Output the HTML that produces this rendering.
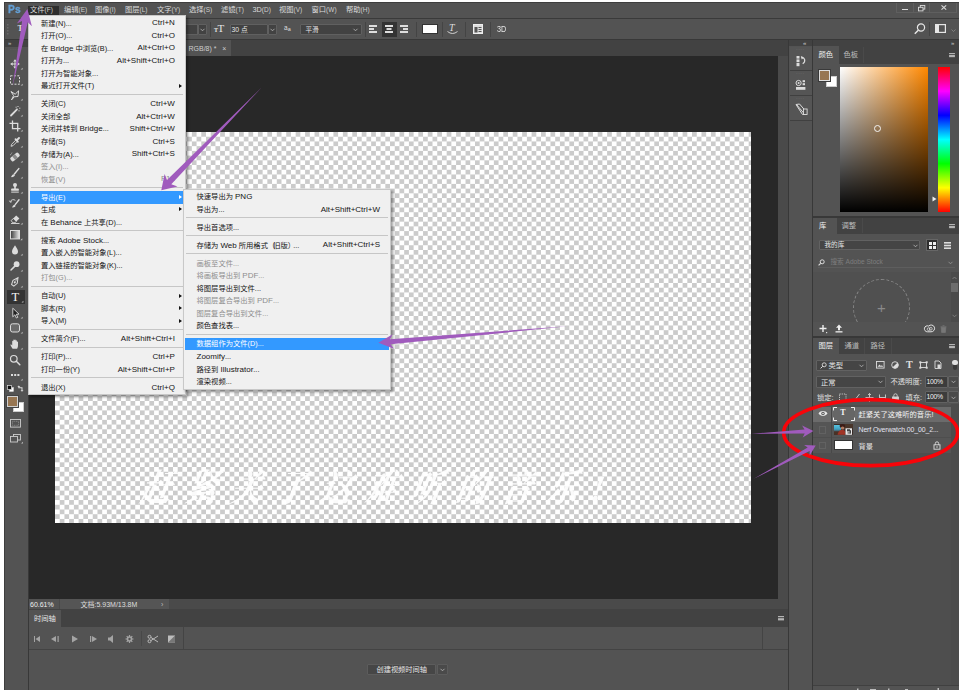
<!DOCTYPE html>
<html lang="zh-CN">
<head>
<meta charset="utf-8">
<title>Photoshop</title>
<style>
*{box-sizing:border-box;margin:0;padding:0}
html,body{width:962px;height:690px;overflow:hidden;background:#fff}
body{position:relative;font-family:"Liberation Sans","Noto Sans CJK SC",sans-serif;font-size:8px;color:#ddd;line-height:1}
.abs{position:absolute}
#app{position:absolute;left:4px;top:2px;width:955px;height:688px;background:#535353;overflow:hidden}
#pg{position:absolute;left:-4px;top:-2px;width:962px;height:690px}
.t{position:absolute;white-space:nowrap;line-height:1}
svg{position:absolute;overflow:visible}
#menubar{left:4px;top:2px;width:955px;height:16px;background:#535353}
.mb{position:absolute;top:6.3px;font-size:7.3px;color:#dcdcdc;white-space:nowrap}
.mb small{font-size:6.5px;color:#cfcfcf}
#optbar{left:4px;top:19px;width:955px;height:20px;background:#535353}
.hline{position:absolute;height:1px;background:#3a3a3a}
.vline{position:absolute;width:1px;background:#3a3a3a}
.inp{position:absolute;background:#424242;border:1px solid #606060;border-radius:1px}
.menu{position:absolute;background:#f0f0f0;border:1px solid #c8c8c8;box-shadow:1.5px 1.5px 2.5px rgba(0,0,0,.38);color:#151515;font-size:7.3px}
.menu i{font-style:normal;font-size:8px}
.menu u{text-decoration:none;letter-spacing:-2px}
.mi{position:absolute;left:1px;right:1px;height:12.56px}
.mi .l{position:absolute;top:2.6px;white-space:nowrap}
.mi .r{position:absolute;top:2.3px;white-space:nowrap;text-align:right;font-size:8px}
.mi.dis{color:#8e8e8e}
.mi.hl{background:#3399ff;color:#fff}
.mi .ar{position:absolute;top:3.8px;width:0;height:0;border-left:3px solid #111;border-top:2.5px solid transparent;border-bottom:2.5px solid transparent}
.mi.hl .ar{border-left-color:#fff}
.ms{position:absolute;height:1px;background:#c6c6c6}
.tab{position:absolute;font-size:8px;white-space:nowrap}
</style>
</head>
<body>
<div id="app"><div id="pg">

<!-- canvas area -->
<div class="abs" style="left:29px;top:56px;width:749px;height:543px;background:#282828"></div>
<div class="abs" style="left:55px;top:132px;width:696px;height:391px;background-color:#fff;background-image:conic-gradient(#cbcbcb 25%,#fff 0 50%,#cbcbcb 0 75%,#fff 0);background-size:9.438px 9.438px"></div>
<div class="t" style="left:141px;top:472.500px;font-family:'Liberation Serif','Noto Serif CJK SC',serif;font-weight:700;font-style:italic;font-size:31px;letter-spacing:14.100px;color:#fff;opacity:.92;transform:skewX(-10deg) scaleY(1.2);transform-origin:0 50%">赶紧关了这难听的音乐!</div>
<!-- menubar -->
<div class="abs" id="menubar"></div>
<div class="abs" style="left:28px;top:5.800px;width:30.500px;height:9.400px;background:#2e2e2e"></div>
<div class="t" style="left:8.300px;top:3.800px;font-size:11.800px;font-weight:bold;color:#64a0d6;letter-spacing:0.200px;transform:scaleX(.86);transform-origin:0 0;-webkit-text-stroke:0.350px #64a0d6">Ps</div>
<div class="mb" style="left:30px">文件<small>(F)</small></div>
<div class="mb" style="left:64px">编辑<small>(E)</small></div>
<div class="mb" style="left:95px">图像<small>(I)</small></div>
<div class="mb" style="left:125px">图层<small>(L)</small></div>
<div class="mb" style="left:157px">文字<small>(Y)</small></div>
<div class="mb" style="left:189px">选择<small>(S)</small></div>
<div class="mb" style="left:221px">滤镜<small>(T)</small></div>
<div class="mb" style="left:252.5px">3D<small>(D)</small></div>
<div class="mb" style="left:279px">视图<small>(V)</small></div>
<div class="mb" style="left:311.5px">窗口<small>(W)</small></div>
<div class="mb" style="left:346px">帮助<small>(H)</small></div>
<div class="hline" style="left:4px;top:18px;width:955px"></div>
<div class="abs" style="left:896px;top:2px;width:61px;height:11px;border:1px solid #5f5f5f;border-top:none"></div>
<div class="vline" style="left:913px;top:2px;height:11px;background:#5f5f5f"></div>
<div class="vline" style="left:929px;top:2px;height:11px;background:#5f5f5f"></div>
<div class="abs" style="left:901.500px;top:8.500px;width:6px;height:1.600px;background:#dadada"></div>
<svg style="left:918px;top:5px" width="8" height="7" viewBox="0 0 8 7"><rect x="2.300" y="0.500" width="4.500" height="3.600" fill="none" stroke="#dadada" stroke-width="0.900"/><rect x="0.500" y="2.300" width="4.500" height="3.600" fill="#535353" stroke="#dadada" stroke-width="0.900"/></svg>
<svg style="left:941px;top:5.300px" width="6" height="5" viewBox="0 0 6 5"><path d="M0.500 0.300L5.200 4.700M5.200 0.300L0.500 4.700" stroke="#dadada" stroke-width="1.100"/></svg>
<!-- options bar -->
<div class="abs" id="optbar"></div>
<div class="hline" style="left:4px;top:39px;width:955px;background:#383838"></div>
<div class="inp" style="left:186px;top:24px;width:12px;height:11px;border-left:none"></div>
<div class="inp" style="left:198px;top:24px;width:8.500px;height:11px"></div>
<svg style="left:199.800px;top:28px" width="5" height="4" viewBox="0 0 5 4"><path d="M0.5 0.8L2.5 2.8L4.5 0.8" fill="none" stroke="#bbb" stroke-width="0.8"/></svg>
<div class="vline" style="left:210px;top:22px;height:15px;background:#444"></div>
<div class="t" style="left:214px;top:26.5px;font-family:'Liberation Serif',serif;font-size:6px;color:#e6e6e6;font-weight:bold">T</div>
<div class="t" style="left:217.5px;top:23px;font-family:'Liberation Serif',serif;font-size:11px;color:#e6e6e6">T</div>
<div class="inp" style="left:230px;top:24px;width:38px;height:11px"></div>
<div class="t" style="left:231.500px;top:26.500px;font-size:6.800px;color:#e6e6e6">30 点</div>
<div class="inp" style="left:268px;top:24px;width:9px;height:11px"></div>
<svg style="left:270px;top:28px" width="5" height="4" viewBox="0 0 5 4"><path d="M0.5 0.8L2.5 2.8L4.5 0.8" fill="none" stroke="#bbb" stroke-width="0.8"/></svg>
<div class="t" style="left:284px;top:24.500px;font-size:6.500px;color:#ddd">a<span style="font-size:5.500px;position:relative;top:1.500px">a</span></div>
<div class="inp" style="left:300px;top:24px;width:62px;height:11px"></div>
<div class="t" style="left:305.500px;top:26.500px;font-size:6.600px;color:#e6e6e6">平滑</div>
<svg style="left:353px;top:28px" width="5" height="4" viewBox="0 0 5 4"><path d="M0.5 0.8L2.5 2.8L4.5 0.8" fill="none" stroke="#bbb" stroke-width="0.8"/></svg>
<div class="vline" style="left:365px;top:22px;height:15px;background:#444"></div>
<div class="abs" style="left:382px;top:22px;width:15px;height:15px;background:#333"></div>
<svg style="left:369px;top:25px" width="40" height="9" viewBox="0 0 40 9"><g fill="#ddd"><rect x="0" y="0" width="8" height="2"/><rect x="0" y="3" width="5" height="2"/><rect x="0" y="6" width="8" height="2"/><rect x="16" y="0" width="8" height="2"/><rect x="17.5" y="3" width="5" height="2"/><rect x="16" y="6" width="8" height="2"/><rect x="31" y="0" width="8" height="2"/><rect x="34" y="3" width="5" height="2"/><rect x="31" y="6" width="8" height="2"/></g></svg>
<div class="vline" style="left:416px;top:22px;height:15px;background:#444"></div>
<div class="abs" style="left:421.5px;top:23.5px;width:16px;height:10.5px;background:#fff;border:1px solid #333"></div>
<div class="vline" style="left:442px;top:22px;height:15px;background:#444"></div>
<div class="t" style="left:449px;top:23px;font-family:'Liberation Serif',serif;font-size:10px;color:#ddd;font-style:italic">T</div>
<svg style="left:447px;top:31px" width="11" height="4" viewBox="0 0 11 4"><path d="M0.5 0.5Q5.5 4.5 10.5 0.5" fill="none" stroke="#ddd" stroke-width="0.9"/></svg>
<div class="vline" style="left:465px;top:22px;height:15px;background:#444"></div>
<svg style="left:473px;top:24px" width="10" height="10" viewBox="0 0 10 10"><rect x="0.5" y="0.5" width="9" height="9" fill="#ddd" stroke="#eee"/><rect x="1.5" y="3" width="3" height="5.5" fill="#555"/><rect x="5.5" y="3" width="3" height="1" fill="#555"/><rect x="5.5" y="5" width="3" height="1" fill="#555"/><rect x="5.5" y="7" width="3" height="1" fill="#555"/></svg>
<div class="vline" style="left:490px;top:22px;height:15px;background:#444"></div>
<div class="t" style="left:497px;top:25px;font-size:8.5px;color:#e6e6e6;transform:scaleX(.85);transform-origin:0 0">3D</div>
<svg style="left:914px;top:23px" width="12" height="12" viewBox="0 0 12 12"><circle cx="7" cy="4.5" r="3.6" fill="none" stroke="#e6e6e6" stroke-width="1.2"/><path d="M4.3 7.3L0.8 10.8" stroke="#e6e6e6" stroke-width="1.5"/></svg>
<div class="vline" style="left:929px;top:22px;height:14px;background:#444"></div>
<svg style="left:935px;top:24px" width="12" height="10" viewBox="0 0 12 10"><rect x="0.6" y="0.6" width="9.8" height="7.8" fill="none" stroke="#e6e6e6" stroke-width="1.2"/><rect x="1" y="1" width="3" height="7" fill="#e6e6e6"/></svg>
<svg style="left:950.500px;top:28.500px" width="5" height="3" viewBox="0 0 5 3"><path d="M0.500 0.500L2.500 2.500L4.500 0.500" fill="none" stroke="#909090" stroke-width="0.700"/></svg>
<!-- tab bar -->
<div class="abs" style="left:29px;top:40px;width:759px;height:16px;background:#424242"></div>
<div class="abs" style="left:29px;top:40px;width:202px;height:16px;background:#535353"></div>
<div class="t" style="left:188.500px;top:45px;font-size:7px;color:#cfcfcf">RGB/8) *&nbsp;&nbsp;&nbsp;<span style="font-size:7px">×</span></div>
<!-- toolbar -->
<div class="abs" style="left:4px;top:40px;width:24px;height:650px;background:#535353"></div>
<div class="abs" style="left:4px;top:40px;width:24px;height:7px;background:#424242"></div>
<div class="vline" style="left:28px;top:40px;height:650px;background:#383838"></div>
<div class="t" style="left:8px;top:39.5px;font-size:6px;color:#ccc;letter-spacing:-1px">»</div>
<div class="t" style="left:10px;top:47px;font-size:5px;color:#777;letter-spacing:0.5px">····</div>
<svg style="left:6px;top:24px" width="4" height="11" viewBox="0 0 4 11"><g fill="#6a6a6a"><rect x="1" y="0" width="1.500" height="1.500"/><rect x="1" y="3" width="1.500" height="1.500"/><rect x="1" y="6" width="1.500" height="1.500"/><rect x="1" y="9" width="1.500" height="1.500"/></g></svg>
<div class="t" style="left:17.500px;top:24.500px;font-family:'Liberation Serif',serif;font-size:8px;color:#ddd;font-weight:bold">T</div>
<svg style="left:8.2px;top:57.3px" width="14" height="14" viewBox="0 0 14 14"><g fill="#dcdcdc"><path d="M7 2.200L8.800 4.600H5.200z"/><path d="M7 11.800L8.800 9.400H5.200z"/><path d="M2.200 7L4.600 5.200V8.800z"/><path d="M11.800 7L9.400 5.200V8.800z"/><rect x="6.500" y="4" width="1" height="6"/><rect x="4" y="6.500" width="6" height="1"/></g><path d="M14.6 12.6h-1.900l1.900-1.900z" fill="#c4c4c4"/></svg>
<svg style="left:8.2px;top:72.5px" width="14" height="14" viewBox="0 0 14 14"><rect x="2.500" y="2.800" width="9" height="8.400" fill="none" stroke="#dcdcdc" stroke-width="1" stroke-dasharray="2 1.400"/><path d="M14.6 12.6h-1.900l1.900-1.900z" fill="#c4c4c4"/></svg>
<svg style="left:8.2px;top:87.7px" width="14" height="14" viewBox="0 0 14 14"><path d="M3 3.500L7.200 6.200L10.600 2.800L10 8.500L6.200 8.800L4 11.500L5.500 7.500Z" fill="none" stroke="#dcdcdc" stroke-width="1"/><path d="M3 11.800l3.200-3" stroke="#dcdcdc" stroke-width="1"/><path d="M14.6 12.6h-1.900l1.900-1.900z" fill="#c4c4c4"/></svg>
<svg style="left:8.2px;top:103.6px" width="14" height="14" viewBox="0 0 14 14"><path d="M3 11.500L9 5.300" stroke="#dcdcdc" stroke-width="1.800" stroke-linecap="round"/><g fill="#dcdcdc"><rect x="9.500" y="2" width="1" height="1"/><rect x="11.300" y="3.700" width="1" height="1"/><rect x="7.600" y="2.700" width="1" height="1"/><rect x="10.500" y="6.300" width="1" height="1"/></g><path d="M14.6 12.6h-1.900l1.900-1.900z" fill="#c4c4c4"/></svg>
<svg style="left:8.2px;top:118.9px" width="14" height="14" viewBox="0 0 14 14"><path d="M4.500 1.500V9.700H12.500M1.500 4.300H9.700V12.500" fill="none" stroke="#dcdcdc" stroke-width="1.300"/><path d="M14.6 12.6h-1.900l1.900-1.900z" fill="#c4c4c4"/></svg>
<svg style="left:8.2px;top:134.5px" width="14" height="14" viewBox="0 0 14 14"><path d="M3 11.300L3.600 9.300L7.800 5.100L9.200 6.500L5 10.700Z" fill="none" stroke="#dcdcdc" stroke-width="0.900"/><path d="M7.500 4.200L9.800 6.700M8.600 5.400L11 3" stroke="#dcdcdc" stroke-width="1.900" stroke-linecap="round"/><path d="M14.6 12.6h-1.900l1.900-1.900z" fill="#c4c4c4"/></svg>
<svg style="left:8.2px;top:150.0px" width="14" height="14" viewBox="0 0 14 14"><g transform="rotate(-40 7 7)"><rect x="2" y="4.600" width="10" height="4.800" rx="1.500" fill="#dcdcdc"/><rect x="5.300" y="4.600" width="3.400" height="4.800" fill="#8a8a8a"/></g><path d="M2.500 5.200a3 3 0 0 1 2.400-2.600" fill="none" stroke="#dcdcdc" stroke-width="0.800" stroke-dasharray="1 0.800"/><path d="M14.6 12.6h-1.900l1.900-1.900z" fill="#c4c4c4"/></svg>
<svg style="left:8.2px;top:165.5px" width="14" height="14" viewBox="0 0 14 14"><path d="M10.800 2.600L6.400 8" stroke="#dcdcdc" stroke-width="1.500" stroke-linecap="round"/><path d="M5.900 8.200c-1.400 0-2 1.200-2.900 2.900c1.900 0.300 3.600-0.500 3.900-1.800z" fill="#dcdcdc"/><path d="M14.6 12.6h-1.900l1.900-1.900z" fill="#c4c4c4"/></svg>
<svg style="left:8.2px;top:181.0px" width="14" height="14" viewBox="0 0 14 14"><g fill="#dcdcdc"><circle cx="7" cy="4" r="2"/><rect x="6.200" y="5" width="1.600" height="3"/><rect x="3.200" y="7.600" width="7.600" height="2.200" rx="0.600"/><rect x="3.200" y="10.600" width="7.600" height="1"/></g><path d="M14.6 12.6h-1.900l1.900-1.900z" fill="#c4c4c4"/></svg>
<svg style="left:8.2px;top:196.5px" width="14" height="14" viewBox="0 0 14 14"><path d="M11 2.800L7.200 7.600" stroke="#dcdcdc" stroke-width="1.400" stroke-linecap="round"/><path d="M6.700 7.800c-1.300 0-1.800 1-2.600 2.600c1.700 0.300 3.200-0.400 3.500-1.600z" fill="#dcdcdc"/><path d="M2.200 4.800a3.300 3.300 0 0 1 5.200-1.400" fill="none" stroke="#dcdcdc" stroke-width="0.900"/><path d="M1.400 3.600l0.900 1.700l1.700-0.700" fill="none" stroke="#dcdcdc" stroke-width="0.800"/><path d="M14.6 12.6h-1.900l1.900-1.900z" fill="#c4c4c4"/></svg>
<svg style="left:8.2px;top:212.0px" width="14" height="14" viewBox="0 0 14 14"><path d="M3.200 8.600L8.200 3.600L11.400 6.400L7 10.800H4.800Z" fill="#dcdcdc"/><path d="M3.200 8.600L5.400 6.400L8.200 9.400L7 10.800H4.800Z" fill="#535353" stroke="#dcdcdc" stroke-width="0.800"/><path d="M3 11.500h8.500" stroke="#dcdcdc" stroke-width="0.900"/><path d="M14.6 12.6h-1.900l1.900-1.900z" fill="#c4c4c4"/></svg>
<svg style="left:9.800px;top:229.700px" width="10" height="10" viewBox="0 0 10 10"><defs><linearGradient id="tg" x1="0" x2="1" y1="0" y2="0"><stop offset="0" stop-color="#3a3a3a"/><stop offset="1" stop-color="#e8e8e8"/></linearGradient></defs><rect x="0.500" y="0.500" width="9" height="8.400" fill="url(#tg)" stroke="#dcdcdc" stroke-width="1"/><path d="M12.300 10.200h-1.900l1.900-1.900z" fill="#c4c4c4"/></svg>
<svg style="left:8.2px;top:243.0px" width="14" height="14" viewBox="0 0 14 14"><path d="M7 2.200C8.400 4.800 10 6.400 10 8.400a3 3 0 0 1-6 0C4 6.400 5.600 4.800 7 2.200z" fill="#dcdcdc"/><path d="M14.6 12.6h-1.900l1.900-1.900z" fill="#c4c4c4"/></svg>
<svg style="left:8.2px;top:259.0px" width="14" height="14" viewBox="0 0 14 14"><circle cx="8.600" cy="5.200" r="2.900" fill="#dcdcdc"/><path d="M6.400 7.600L3 11" stroke="#dcdcdc" stroke-width="1.500" stroke-linecap="round"/><path d="M14.6 12.6h-1.900l1.900-1.900z" fill="#c4c4c4"/></svg>
<svg style="left:8.2px;top:275.0px" width="14" height="14" viewBox="0 0 14 14"><g transform="rotate(35 7 7)"><path d="M7 1.800L9.600 6.800L8.400 11H5.600L4.400 6.800Z" fill="none" stroke="#dcdcdc" stroke-width="1"/><circle cx="7" cy="7.400" r="1" fill="#dcdcdc"/><path d="M7 2v4.500" stroke="#dcdcdc" stroke-width="0.700"/></g><path d="M14.6 12.6h-1.900l1.900-1.900z" fill="#c4c4c4"/></svg>
<div class="abs" style="left:7px;top:290px;width:18px;height:14px;background:#333"></div>
<div class="t" style="left:11.400px;top:290.800px;font-family:'Liberation Serif',serif;font-size:12.500px;color:#f4f4f4">T</div>
<svg style="left:20.500px;top:300px" width="3" height="3" viewBox="0 0 3 3"><path d="M2.400 2.600h-1.900l1.900-1.900z" fill="#c4c4c4"/></svg>
<svg style="left:8.2px;top:305.7px" width="14" height="14" viewBox="0 0 14 14"><path d="M4.800 2.200V10.800L6.900 8.800L8.400 12L9.800 11.300L8.300 8.300L11 8.100Z" fill="#222" stroke="#dcdcdc" stroke-width="0.900" stroke-linejoin="round"/><path d="M14.6 12.6h-1.900l1.900-1.900z" fill="#c4c4c4"/></svg>
<svg style="left:8.2px;top:320.9px" width="14" height="14" viewBox="0 0 14 14"><rect x="2.500" y="2.800" width="9" height="8.200" rx="2" fill="#6a6a6a" stroke="#dcdcdc" stroke-width="1"/><path d="M14.6 12.6h-1.900l1.900-1.900z" fill="#c4c4c4"/></svg>
<svg style="left:8.2px;top:336.5px" width="14" height="14" viewBox="0 0 14 14"><path d="M4.600 11.800C3.800 10.600 2.800 9 2.400 7.800C2.900 7.300 3.600 7.600 4.200 8.600V4.200c0-.7 1-.7 1.100 0V3.200c0-.8 1.200-.8 1.200 0V3c0-.8 1.200-.8 1.200 0v.8c0-.8 1.200-.8 1.200 0V5c0-.7 1.100-.7 1.100 0V8.600c0 1.400-.4 2.200-.9 3.200z" fill="#dcdcdc"/><path d="M14.6 12.6h-1.900l1.900-1.900z" fill="#c4c4c4"/></svg>
<svg style="left:8.2px;top:352.5px" width="14" height="14" viewBox="0 0 14 14"><circle cx="5.800" cy="5.800" r="3.300" fill="none" stroke="#dcdcdc" stroke-width="1.200"/><path d="M8.300 8.300L11.800 11.800" stroke="#dcdcdc" stroke-width="1.500" stroke-linecap="round"/></svg>
<svg style="left:8.2px;top:367.7px" width="14" height="14" viewBox="0 0 14 14"><g fill="#dcdcdc"><rect x="3" y="6" width="2" height="2"/><rect x="6.200" y="6" width="2" height="2"/><rect x="9.400" y="6" width="2" height="2"/></g><path d="M14.6 12.6h-1.900l1.900-1.900z" fill="#c4c4c4"/></svg>
<svg style="left:6.500px;top:385px" width="7" height="7" viewBox="0 0 7 7"><rect x="2.500" y="2.500" width="4" height="4" fill="#fff" stroke="#ddd" stroke-width="0.500"/><rect x="0.500" y="0.500" width="4" height="4" fill="#111" stroke="#ddd" stroke-width="0.700"/></svg>
<svg style="left:17px;top:384.500px" width="7" height="7" viewBox="0 0 7 7"><path d="M1.800 0.500L0.300 2H1.300V3.200H4.500V5.200H3.500L5 6.800L6.500 5.200H5.500V2.200H2.300V2H3.300Z" fill="#dcdcdc"/></svg>
<div class="abs" style="left:13px;top:402px;width:11px;height:10px;background:#fff;border:0.500px solid #ccc"></div>
<div class="abs" style="left:7px;top:395.500px;width:11px;height:11px;background:#977652;border:1px solid #d0d0d0;outline:0.500px solid #444"></div>
<svg style="left:9.500px;top:419px" width="12" height="9" viewBox="0 0 12 9"><rect x="0.500" y="0.500" width="10" height="7.600" fill="none" stroke="#ccc" stroke-width="0.900"/><rect x="2.500" y="2.300" width="6" height="4" fill="none" stroke="#999" stroke-width="0.700" stroke-dasharray="1 0.700"/></svg>
<svg style="left:9.500px;top:434px" width="14" height="10" viewBox="0 0 14 10"><rect x="3.500" y="0.500" width="7" height="5.500" fill="none" stroke="#ccc" stroke-width="0.900"/><rect x="0.500" y="2.500" width="7" height="5.500" fill="#535353" stroke="#ccc" stroke-width="0.900"/><path d="M13 9.600h-1.900l1.900-1.900z" fill="#c4c4c4"/></svg>
<!-- status + timeline -->
<div class="abs" style="left:29px;top:599px;width:759px;height:10px;background:#4a4a4a"></div>
<div class="abs" style="left:29px;top:599px;width:30px;height:10px;background:#535353"></div>
<div class="t" style="left:30px;top:600.800px;font-size:7px;color:#eee">60.61%</div>
<div class="abs" style="left:60px;top:599px;width:109px;height:10px;background:#555"></div>
<div class="t" style="left:80.500px;top:600.500px;font-size:7px;color:#ddd">文档:5.93M/13.8M</div>
<div class="t" style="left:161px;top:601px;font-size:7px;color:#bbb">›</div>
<div class="abs" style="left:29px;top:609px;width:759px;height:18px;background:#424242"></div>
<div class="abs" style="left:29px;top:610px;width:32px;height:17px;background:#535353"></div>
<div class="t" style="left:34px;top:615.300px;font-size:7.300px;color:#e6e6e6">时间轴</div>
<div class="abs" style="left:29px;top:627px;width:759px;height:63px;background:#535353"></div>
<div class="hline" style="left:29px;top:649px;width:759px;background:#434343"></div>
<div class="vline" style="left:141px;top:631px;height:15px;background:#484848"></div>
<div class="vline" style="left:183px;top:627px;height:22px;background:#444"></div>
<div class="vline" style="left:762px;top:627px;height:22px;background:#444"></div>
<svg style="left:32px;top:634px" width="150" height="10" viewBox="0 0 150 10">
<g fill="#a4a4a4">
<rect x="2" y="2" width="1" height="6"/><path d="M8 2L8 8L3.5 5Z"/>
<path d="M24 2L24 8L19 5Z"/><rect x="25.5" y="2" width="1.2" height="6"/>
<path d="M40 1.5L40 8.5L46 5Z"/>
<rect x="58" y="2" width="1.2" height="6"/><path d="M60 2L60 8L65 5Z"/>
<path d="M76 3.5h2l3-2.5v8l-3-2.5h-2z"/>
<circle cx="97.500" cy="5" r="2.800"/>
</g>
<g stroke="#a4a4a4" stroke-width="1.2"><path d="M97.500 1v8M93.500 5h8M94.700 2.200l5.600 5.600M100.300 2.200l-5.600 5.600"/></g>
<circle cx="97.500" cy="5" r="1.200" fill="#535353"/>
<g fill="none" stroke="#c4c4c4" stroke-width="0.9"><circle cx="117.500" cy="2.800" r="1.500"/><circle cx="117.500" cy="7.200" r="1.500"/><path d="M119 3.500L126 8M119 6.500L126 2"/></g>
<rect x="136" y="1.500" width="7" height="7" fill="#bdbdbd"/><path d="M143 1.500v7h-7z" fill="#777"/>
</svg>
<div class="inp" style="left:367px;top:664px;width:69px;height:11px;background:#464646;border-color:#5c5c5c"></div>
<div class="t" style="left:376.500px;top:666.200px;font-size:7.200px;color:#e6e6e6">创建视频时间轴</div>
<div class="inp" style="left:437px;top:664px;width:11px;height:11px;background:#4a4a4a;border-color:#5c5c5c"></div>
<svg style="left:440px;top:668px" width="5" height="4" viewBox="0 0 5 4"><path d="M0.500 0.800L2.500 2.800L4.500 0.800" fill="none" stroke="#bbb" stroke-width="0.8"/></svg>
<svg style="left:778px;top:616px" width="7" height="5" viewBox="0 0 7 5"><rect x="0" y="0" width="6" height="1.200" fill="#b4b4b4"/><rect x="0" y="2.200" width="6" height="2.200" fill="#b4b4b4"/></svg>
<!-- right column -->
<div class="abs" style="left:778px;top:56px;width:10px;height:553px;background:#4a4a4a"></div>
<div class="vline" style="left:788px;top:40px;height:650px;background:#383838"></div>
<div class="abs" style="left:789px;top:40px;width:23px;height:650px;background:#535353"></div>
<div class="abs" style="left:789px;top:40px;width:170px;height:6px;background:#424242"></div>
<div class="vline" style="left:812px;top:40px;height:650px;background:#383838"></div>
<div class="abs" style="left:813px;top:46px;width:146px;height:644px;background:#535353"></div>
<div class="t" style="left:803px;top:39.500px;font-size:6px;color:#ccc;letter-spacing:-1px">«</div>
<div class="t" style="left:951px;top:39.500px;font-size:6px;color:#ccc;letter-spacing:-1px">»</div>
<div class="abs" style="left:789.500px;top:46.5px;width:22px;height:24.5px;background:#555;border-bottom:1px solid #404040"></div>
<div class="t" style="left:796px;top:46.5px;font-size:5px;color:#777;letter-spacing:0.500px">····</div>
<div class="abs" style="left:789.500px;top:71px;width:22px;height:25px;background:#555;border-bottom:1px solid #404040"></div>
<div class="t" style="left:796px;top:71px;font-size:5px;color:#777;letter-spacing:0.500px">····</div>
<div class="abs" style="left:789.500px;top:96px;width:22px;height:24.5px;background:#555;border-bottom:1px solid #404040"></div>
<div class="t" style="left:796px;top:96px;font-size:5px;color:#777;letter-spacing:0.500px">····</div>
<svg style="left:795px;top:55px" width="12" height="12" viewBox="0 0 12 12"><g fill="#dcdcdc"><rect x="1.500" y="1" width="3" height="2.600"/><rect x="1.500" y="4.400" width="3" height="2.600"/><rect x="1.500" y="7.800" width="3" height="3.400"/></g><path d="M6.500 2.600c3.400-.6 4.600 3.800 1.200 6.200" fill="none" stroke="#dcdcdc" stroke-width="1.200"/><path d="M5.800 1l3 1.200l-2 2.200z" fill="#dcdcdc"/></svg>
<svg style="left:794.500px;top:79.300px" width="12" height="12" viewBox="0 0 12 12"><circle cx="3.600" cy="4" r="2.600" fill="none" stroke="#dcdcdc" stroke-width="1"/><circle cx="3.600" cy="4" r="1" fill="#dcdcdc"/><g fill="#dcdcdc"><rect x="7.600" y="1.200" width="2.400" height="2"/><rect x="7.600" y="4.200" width="2.400" height="2"/><rect x="1" y="8" width="9.400" height="2.800"/></g></svg>
<svg style="left:794.500px;top:103px" width="14" height="13" viewBox="0 0 14 13"><path d="M1 1.500L4.500 1L11 8.500L10.500 11.500H7.500Z" fill="none" stroke="#dcdcdc" stroke-width="1"/><path d="M1.500 1.500L9.500 11" stroke="#dcdcdc" stroke-width="1"/><rect x="8.500" y="6" width="3.600" height="5.500" fill="#535353" stroke="#dcdcdc" stroke-width="0.900"/></svg>
<div class="abs" style="left:813px;top:46px;width:146px;height:17.500px;background:#424242"></div>
<div class="abs" style="left:813px;top:46px;width:25.500px;height:17.500px;background:#535353"></div>
<div class="vline" style="left:863px;top:47px;height:16px;background:#4a4a4a"></div>
<div class="t" style="left:818.500px;top:50.800px;font-size:7.300px;color:#f0f0f0">颜色</div>
<div class="t" style="left:843.500px;top:50.800px;font-size:7.300px;color:#bdbdbd">色板</div>
<svg style="left:949px;top:52.5px" width="6" height="4.200" viewBox="0 0 7 5"><rect x="0" y="0" width="7" height="1.300" fill="#b4b4b4"/><rect x="0" y="2.300" width="7" height="2.700" fill="#b4b4b4"/></svg>
<div class="abs" style="left:825.500px;top:76px;width:11px;height:11px;background:#fff;border:0.500px solid #ccc"></div>
<div class="abs" style="left:818.800px;top:69.500px;width:11.500px;height:11.500px;background:#977652;border:1px solid #dedede;outline:1px solid #3a3a3a"></div>
<div class="abs" style="left:840px;top:67px;width:88px;height:145px;background:linear-gradient(to bottom,rgba(0,0,0,0),#000),linear-gradient(to right,#fff,#ff8800)"></div>
<div class="abs" style="left:873.500px;top:125px;width:7px;height:7px;border:1px solid #f4f4f4;border-radius:50%"></div>
<div class="abs" style="left:938px;top:67px;width:12px;height:145px;background:linear-gradient(to bottom,#ff0000 0%,#ff00ff 16.660%,#0000ff 33.330%,#00ffff 50%,#00ff00 66.660%,#ffff00 83.330%,#ff0000 100%)"></div>
<svg style="left:932px;top:196px" width="5" height="6" viewBox="0 0 5 6"><path d="M0.500 0.500L4.500 3L0.500 5.500Z" fill="#f0f0f0"/></svg>
<div class="hline" style="left:813px;top:216px;width:146px;background:#383838;height:1.500px"></div>
<div class="abs" style="left:813px;top:217.500px;width:146px;height:16px;background:#424242"></div>
<div class="abs" style="left:813px;top:217.500px;width:23.500px;height:16px;background:#535353"></div>
<div class="vline" style="left:861.500px;top:218px;height:15px;background:#4a4a4a"></div>
<div class="t" style="left:819px;top:221.800px;font-size:7.300px;color:#f0f0f0">库</div>
<div class="t" style="left:841.500px;top:221.800px;font-size:7.300px;color:#bdbdbd">调整</div>
<svg style="left:949px;top:223.5px" width="6" height="4.200" viewBox="0 0 7 5"><rect x="0" y="0" width="7" height="1.300" fill="#b4b4b4"/><rect x="0" y="2.300" width="7" height="2.700" fill="#b4b4b4"/></svg>
<div class="inp" style="left:818.500px;top:239.500px;width:101.500px;height:10.500px;background:#454545;border-color:#626262"></div>
<div class="t" style="left:824.500px;top:241.500px;font-size:6.600px;color:#e6e6e6">我的库</div>
<svg style="left:912.5px;top:243.5px" width="5" height="4" viewBox="0 0 5 4"><path d="M0.500 0.800L2.500 2.800L4.500 0.800" fill="none" stroke="#bbb" stroke-width="0.800"/></svg>
<div class="abs" style="left:926px;top:239px;width:12px;height:12px;background:#2e2e2e;border:0.500px solid #666"></div>
<svg style="left:928.500px;top:241.500px" width="7" height="7" viewBox="0 0 7 7"><g fill="#eee"><rect x="0" y="0" width="3" height="3"/><rect x="4" y="0" width="3" height="3"/><rect x="0" y="4" width="3" height="3"/><rect x="4" y="4" width="3" height="3"/></g></svg>
<svg style="left:943.500px;top:241.500px" width="7" height="7" viewBox="0 0 7 7"><g fill="#ddd"><rect x="0" y="0" width="7" height="1.600"/><rect x="0" y="2.700" width="7" height="1.600"/><rect x="0" y="5.400" width="7" height="1.600"/></g></svg>
<svg style="left:818px;top:258.500px" width="7" height="7" viewBox="0 0 7 7"><circle cx="4.200" cy="2.800" r="2" fill="none" stroke="#ddd" stroke-width="1"/><path d="M2.700 4.300L0.600 6.400" stroke="#ddd" stroke-width="1.100"/></svg>
<div class="t" style="left:830.500px;top:258.500px;font-size:6.600px;color:#7e7e7e">搜索 Adobe Stock</div>
<svg style="left:947.5px;top:260.5px" width="5" height="4" viewBox="0 0 5 4"><path d="M0.500 0.800L2.500 2.800L4.500 0.800" fill="none" stroke="#999" stroke-width="0.800"/></svg>
<div class="hline" style="left:818px;top:267px;width:137px;background:#5e5e5e"></div>
<div class="abs" style="left:813px;top:272px;width:146px;height:50px;background:#505050;overflow:hidden"><div class="abs" style="left:40px;top:7px;width:57px;height:57px;border:1px dashed #858585;border-radius:50%"></div><div class="t" style="left:64px;top:27.500px;font-size:15px;color:#8a8a8a;font-weight:normal">+</div></div>
<div class="abs" style="left:950.500px;top:272px;width:8px;height:50px;background:#4b4b4b"></div>
<div class="abs" style="left:951px;top:282.500px;width:7px;height:9.500px;background:#6c6c6c"></div>
<svg style="left:952px;top:276px" width="5" height="4" viewBox="0 0 5 4"><path d="M0.500 3L2.500 1L4.500 3" fill="none" stroke="#888" stroke-width="0.800"/></svg>
<svg style="left:952px;top:313.5px" width="5" height="4" viewBox="0 0 5 4"><path d="M0.500 0.800L2.500 2.800L4.500 0.800" fill="none" stroke="#888" stroke-width="0.800"/></svg>
<svg style="left:819px;top:324px" width="9" height="10" viewBox="0 0 9 10"><path d="M4 1v7M0.500 4.500h7" stroke="#eee" stroke-width="1.400"/><rect x="7" y="8" width="1.200" height="1.200" fill="#ddd"/></svg>
<svg style="left:834.500px;top:324px" width="8" height="9" viewBox="0 0 8 9"><path d="M4 0.500L7 3.800H5V6.200H3V3.800H1Z" fill="#eee"/><rect x="0.500" y="7.200" width="7" height="1.300" fill="#eee"/></svg>
<svg style="left:923.500px;top:324px" width="11" height="9" viewBox="0 0 11 9"><path d="M3.500 7.800a3 3 0 1 1 1.200-5.700a3.400 3.400 0 1 1 2.300 5.700z" fill="none" stroke="#e4e4e4" stroke-width="1"/><circle cx="4.600" cy="5.200" r="1.400" fill="none" stroke="#e4e4e4" stroke-width="0.700"/><circle cx="6.800" cy="4.800" r="1.400" fill="none" stroke="#e4e4e4" stroke-width="0.700"/></svg>
<svg style="left:939.500px;top:324.500px" width="7" height="8" viewBox="0 0 7 8"><path d="M0.500 1.800h6M2.500 0.600h2M1.200 2.200l.4 5.300h3.800l.4-5.300z" fill="#777" stroke="#777" stroke-width="0.700"/></svg>
<div class="hline" style="left:813px;top:336px;width:146px;background:#383838;height:1.500px"></div>
<div class="abs" style="left:813px;top:337.500px;width:146px;height:16.500px;background:#424242"></div>
<div class="abs" style="left:813px;top:337.500px;width:25.500px;height:16.500px;background:#535353"></div>
<div class="vline" style="left:864px;top:338px;height:16px;background:#4a4a4a"></div>
<div class="vline" style="left:891px;top:338px;height:16px;background:#4a4a4a"></div>
<div class="t" style="left:818.500px;top:341.800px;font-size:7.300px;color:#f0f0f0">图层</div>
<div class="t" style="left:844.500px;top:341.800px;font-size:7.300px;color:#bdbdbd">通道</div>
<div class="t" style="left:870.500px;top:341.800px;font-size:7.300px;color:#bdbdbd">路径</div>
<svg style="left:949px;top:343.5px" width="6" height="4.200" viewBox="0 0 7 5"><rect x="0" y="0" width="7" height="1.300" fill="#b4b4b4"/><rect x="0" y="2.300" width="7" height="2.700" fill="#b4b4b4"/></svg>
<div class="inp" style="left:815.500px;top:359.500px;width:51.500px;height:11px;background:#454545;border-color:#626262"></div>
<svg style="left:819.500px;top:361.500px" width="7" height="7" viewBox="0 0 7 7"><circle cx="4.200" cy="2.800" r="2" fill="none" stroke="#ddd" stroke-width="0.900"/><path d="M2.700 4.300L0.600 6.400" stroke="#ddd" stroke-width="1"/></svg>
<div class="t" style="left:828.500px;top:362.300px;font-size:7.300px;color:#e6e6e6">类型</div>
<svg style="left:859px;top:363.5px" width="5" height="4" viewBox="0 0 5 4"><path d="M0.500 0.800L2.500 2.800L4.500 0.800" fill="none" stroke="#bbb" stroke-width="0.800"/></svg>
<svg style="left:876px;top:360.500px" width="9" height="8" viewBox="0 0 9 8"><rect x="0.500" y="0.500" width="7.600" height="6.600" fill="none" stroke="#ddd" stroke-width="0.900"/><path d="M1.500 5.800l2-2.200l1.400 1.400l1-.8l1.400 1.600z" fill="#ddd"/></svg>
<svg style="left:890.500px;top:360.500px" width="8" height="8" viewBox="0 0 8 8"><circle cx="4" cy="4" r="3.300" fill="none" stroke="#ddd" stroke-width="0.900"/><path d="M4 0.700a3.300 3.300 0 0 1 0 6.600z" fill="#ddd" transform="rotate(45 4 4)"/></svg>
<div class="t" style="left:906px;top:359.500px;font-family:'Liberation Serif',serif;font-size:10px;font-weight:bold;color:#e0e0e0">T</div>
<svg style="left:919px;top:360.500px" width="9" height="8" viewBox="0 0 9 8"><rect x="1.500" y="1.500" width="6" height="5" fill="none" stroke="#ddd" stroke-width="0.900"/><g fill="#ddd"><rect x="0.300" y="0.300" width="2" height="2"/><rect x="6.700" y="0.300" width="2" height="2"/><rect x="0.300" y="5.700" width="2" height="2"/><rect x="6.700" y="5.700" width="2" height="2"/></g></svg>
<svg style="left:934px;top:360px" width="8" height="9" viewBox="0 0 8 9"><path d="M1 1h4l2 2v5.500H1z" fill="none" stroke="#ddd" stroke-width="0.900"/><rect x="3.500" y="4.500" width="3" height="3.500" fill="#ddd"/></svg>
<div class="abs" style="left:952.500px;top:360.500px;width:4.500px;height:9.500px;background:#3a3a3a;border-radius:2px"></div>
<div class="abs" style="left:952px;top:359.500px;width:5.500px;height:5.500px;background:#e0e0e0;border-radius:50%"></div>
<div class="inp" style="left:815.500px;top:375.500px;width:70px;height:12px;background:#454545;border-color:#626262"></div>
<div class="t" style="left:821px;top:378.600px;font-size:7.300px;color:#e6e6e6">正常</div>
<svg style="left:878px;top:380px" width="5" height="4" viewBox="0 0 5 4"><path d="M0.500 0.800L2.500 2.800L4.500 0.800" fill="none" stroke="#bbb" stroke-width="0.800"/></svg>
<div class="t" style="left:890.500px;top:378.400px;font-size:7.300px;color:#e0e0e0">不透明度:</div>
<div class="inp" style="left:924.500px;top:375.500px;width:23.500px;height:12px;background:#3c3c3c;border-color:#626262"></div>
<div class="t" style="left:926.500px;top:378.800px;font-size:6.800px;color:#f0f0f0;letter-spacing:-0.300px">100%</div>
<div class="inp" style="left:948px;top:375.500px;width:10.500px;height:12px;background:#4a4a4a;border-color:#626262"></div>
<svg style="left:951px;top:380px" width="5" height="4" viewBox="0 0 5 4"><path d="M0.500 0.800L2.500 2.800L4.500 0.800" fill="none" stroke="#bbb" stroke-width="0.800"/></svg>
<div class="t" style="left:817px;top:394px;font-size:7.300px;color:#e0e0e0">锁定:</div>
<svg style="left:839px;top:392.500px" width="62" height="9" viewBox="0 0 62 9"><g fill="none" stroke="#cfcfcf" stroke-width="0.900"><rect x="0.500" y="1" width="6.500" height="6.500" stroke-dasharray="1.200 1"/><path d="M20.500 1l-5 6.500"/><path d="M30.500 0.500v8M26.500 4.500h8M29 2l1.500-1.500l1.500 1.500M29 7l1.500 1.500l1.500-1.500"/><path d="M40.500 1.500v6M46.500 1.500v6M41 4.500h5"/><rect x="53.500" y="4" width="6" height="4" fill="#cfcfcf"/><path d="M54.800 4v-1.500a1.700 1.700 0 0 1 3.400 0v1.500"/></g></svg>
<div class="t" style="left:905.500px;top:394px;font-size:7.300px;color:#e0e0e0">填充:</div>
<div class="inp" style="left:924.500px;top:391px;width:23.500px;height:12px;background:#3c3c3c;border-color:#626262"></div>
<div class="t" style="left:926.500px;top:394.400px;font-size:6.800px;color:#f0f0f0;letter-spacing:-0.300px">100%</div>
<div class="inp" style="left:948px;top:391px;width:10.500px;height:12px;background:#4a4a4a;border-color:#626262"></div>
<svg style="left:951px;top:395.5px" width="5" height="4" viewBox="0 0 5 4"><path d="M0.500 0.800L2.500 2.800L4.500 0.800" fill="none" stroke="#bbb" stroke-width="0.800"/></svg>
<div class="abs" style="left:813px;top:405px;width:137.500px;height:280px;background:#4e4e4e"></div>
<div class="abs" style="left:950.500px;top:404px;width:8px;height:282px;background:#4c4c4c"></div>
<div class="abs" style="left:813px;top:406.500px;width:137.500px;height:15px;background:#6b6b6b"></div>
<div class="abs" style="left:813px;top:422px;width:137.500px;height:15px;background:#555"></div>
<div class="abs" style="left:813px;top:437.500px;width:137.500px;height:15px;background:#555"></div>
<div class="vline" style="left:831px;top:406.500px;height:46px;background:#484848"></div>
<svg style="left:818px;top:410px" width="10" height="7" viewBox="0 0 10 7"><path d="M0.500 3.500C2.500 0.300 7.500 0.300 9.500 3.500C7.500 6.700 2.500 6.700 0.500 3.500Z" fill="#e8e8e8"/><circle cx="5" cy="3.500" r="1.700" fill="#555"/><circle cx="5" cy="3.500" r="0.800" fill="#e8e8e8"/></svg>
<div class="abs" style="left:818.500px;top:426px;width:7.500px;height:7.500px;border:1px solid #626262"></div>
<div class="abs" style="left:818.500px;top:441.500px;width:7.500px;height:7.500px;border:1px solid #626262"></div>
<svg style="left:832.500px;top:407px" width="22" height="14" viewBox="0 0 22 14"><rect x="0" y="0" width="22" height="14" fill="#666"/><path d="M0.500 3.500V0.500H4M18 0.500h3.500v3M21.500 10.500v3H18M4 13.500H0.500v-3" fill="none" stroke="#f0f0f0" stroke-width="1"/></svg>
<div class="t" style="left:840.300px;top:409.300px;font-family:'Liberation Serif',serif;font-size:8px;font-weight:bold;color:#f4f4f4">T</div>
<div class="t" style="left:858.500px;top:411px;font-size:7.300px;color:#f4f4f4">赶紧关了这难听的音乐!</div>
<svg style="left:833.800px;top:424px" width="19" height="10.800" viewBox="0 0 19 10.800"><defs><linearGradient id="th" x1="0" x2="0" y1="0" y2="1"><stop offset="0" stop-color="#58c4e0"/><stop offset="0.600" stop-color="#3f9fc0"/><stop offset="1" stop-color="#4a3a36"/></linearGradient><filter id="bl" x="-10%" y="-10%" width="120%" height="120%"><feGaussianBlur stdDeviation="0.600"/></filter></defs><rect width="19" height="10.800" fill="#3a2c28"/><g filter="url(#bl)"><rect x="0" y="1" width="7" height="7" fill="url(#th)"/><rect x="0" y="7.500" width="6" height="3.300" fill="#4a3028"/><rect x="10" y="0" width="9" height="4" fill="#4a362c"/><ellipse cx="8.500" cy="2" rx="2.800" ry="2" fill="#3a1c18"/><ellipse cx="8.600" cy="4" rx="1.800" ry="1.600" fill="#b07a60"/><path d="M3.500 10.800C4.500 6.500 7 5.500 9 5.800C11 6 11.500 8 11.500 10.800Z" fill="#a03428"/></g><rect x="11.500" y="4.300" width="6.500" height="6.500" fill="#e8e8e8"/><rect x="13" y="5.200" width="3" height="2.200" fill="#444"/><rect x="15.600" y="6.200" width="1.400" height="3.400" fill="#444"/><rect x="13.500" y="8.300" width="2.600" height="1.300" fill="#666"/></svg>
<div class="t" style="left:858.500px;top:426.600px;font-size:6.900px;color:#e4e4f0;letter-spacing:-0.100px">Nerf Overwatch.00_00_2...</div>
<div class="abs" style="left:833.500px;top:439.500px;width:19px;height:10.700px;background:#fff;border:0.500px solid #333"></div>
<div class="t" style="left:858.500px;top:443px;font-size:7.300px;color:#e4e4e4">背景</div>
<svg style="left:932.500px;top:440.500px" width="8" height="9" viewBox="0 0 8 9"><rect x="1" y="3.800" width="6" height="4.400" fill="none" stroke="#ddd" stroke-width="0.900"/><path d="M2.300 3.800v-1.300a1.700 1.700 0 0 1 3.400 0v1.300" fill="none" stroke="#ddd" stroke-width="0.900"/><rect x="3.500" y="5.200" width="1" height="1.600" fill="#ddd"/></svg>
<div class="hline" style="left:813px;top:685px;width:146px;background:#404040"></div>
<div class="abs" style="left:813px;top:686px;width:146px;height:4px;background:#535353"></div>
<svg style="left:856px;top:688px" width="100" height="4" viewBox="0 0 100 4"><g fill="#bbb"><rect x="1" y="0.500" width="1.500" height="3.500"/><rect x="14" y="1" width="6" height="3"/><rect x="32" y="0.500" width="1.500" height="3.500"/><rect x="49" y="1" width="3" height="3"/><rect x="81.500" y="0" width="1.500" height="4"/></g></svg>
<!-- menus -->
<div class="menu" style="left:28px;top:15.0px;width:158.4px;height:380.4px"><div class="mi" style="top:1.0px"><span class="l" style="left:11px">新建(N)...</span><span class="r" style="right:9.5px">Ctrl+N</span></div><div class="mi" style="top:13.6px"><span class="l" style="left:11px">打开(O)...</span><span class="r" style="right:9.5px">Ctrl+O</span></div><div class="mi" style="top:26.1px"><span class="l" style="left:11px">在 <i>Bridge</i> 中浏览(B)...</span><span class="r" style="right:9.5px">Alt+Ctrl+O</span></div><div class="mi" style="top:38.7px"><span class="l" style="left:11px">打开为...</span><span class="r" style="right:9.5px">Alt+Shift+Ctrl+O</span></div><div class="mi" style="top:51.2px"><span class="l" style="left:11px">打开为智能对象...</span></div><div class="mi" style="top:63.8px"><span class="l" style="left:11px">最近打开文件(T)</span><span class="ar" style="left:149px"></span></div><div class="ms" style="left:2px;right:2px;top:77.8px"></div><div class="mi" style="top:81.8px"><span class="l" style="left:11px">关闭(C)</span><span class="r" style="right:9.5px">Ctrl+W</span></div><div class="mi" style="top:94.3px"><span class="l" style="left:11px">关闭全部</span><span class="r" style="right:9.5px">Alt+Ctrl+W</span></div><div class="mi" style="top:106.9px"><span class="l" style="left:11px">关闭并转到 <i>Bridge</i>...</span><span class="r" style="right:9.5px">Shift+Ctrl+W</span></div><div class="mi" style="top:119.4px"><span class="l" style="left:11px">存储(S)</span><span class="r" style="right:9.5px">Ctrl+S</span></div><div class="mi" style="top:132.0px"><span class="l" style="left:11px">存储为(A)...</span><span class="r" style="right:9.5px">Shift+Ctrl+S</span></div><div class="mi dis" style="top:144.6px"><span class="l" style="left:11px">签入(I)...</span></div><div class="mi dis" style="top:157.1px"><span class="l" style="left:11px">恢复(V)</span><span class="r" style="right:9.5px">F12</span></div><div class="ms" style="left:2px;right:2px;top:171.1px"></div><div class="mi hl" style="top:175.1px"><span class="l" style="left:11px">导出(E)</span><span class="ar" style="left:149px"></span></div><div class="mi" style="top:187.6px"><span class="l" style="left:11px">生成</span><span class="ar" style="left:149px"></span></div><div class="mi" style="top:200.2px"><span class="l" style="left:11px">在 <i>Behance</i> 上共享(D)...</span></div><div class="ms" style="left:2px;right:2px;top:214.2px"></div><div class="mi" style="top:218.2px"><span class="l" style="left:11px">搜索 <i>Adobe Stock</i>...</span></div><div class="mi" style="top:230.7px"><span class="l" style="left:11px">置入嵌入的智能对象(L)...</span></div><div class="mi" style="top:243.3px"><span class="l" style="left:11px">置入链接的智能对象(K)...</span></div><div class="mi dis" style="top:255.8px"><span class="l" style="left:11px">打包(G)...</span></div><div class="ms" style="left:2px;right:2px;top:269.8px"></div><div class="mi" style="top:273.8px"><span class="l" style="left:11px">自动(U)</span><span class="ar" style="left:149px"></span></div><div class="mi" style="top:286.4px"><span class="l" style="left:11px">脚本(R)</span><span class="ar" style="left:149px"></span></div><div class="mi" style="top:298.9px"><span class="l" style="left:11px">导入(M)</span><span class="ar" style="left:149px"></span></div><div class="ms" style="left:2px;right:2px;top:312.9px"></div><div class="mi" style="top:316.9px"><span class="l" style="left:11px">文件简介(F)...</span><span class="r" style="right:9.5px">Alt+Shift+Ctrl+I</span></div><div class="ms" style="left:2px;right:2px;top:330.8px"></div><div class="mi" style="top:334.8px"><span class="l" style="left:11px">打印(P)...</span><span class="r" style="right:9.5px">Ctrl+P</span></div><div class="mi" style="top:347.4px"><span class="l" style="left:11px">打印一份(Y)</span><span class="r" style="right:9.5px">Alt+Shift+Ctrl+P</span></div><div class="ms" style="left:2px;right:2px;top:361.4px"></div><div class="mi" style="top:365.4px"><span class="l" style="left:11px">退出(X)</span><span class="r" style="right:9.5px">Ctrl+Q</span></div></div>
<div class="menu" style="left:183px;top:188.7px;width:207.5px;height:200.9px"><div class="mi" style="top:1.0px"><span class="l" style="left:11.5px">快速导出为 <i>PNG</i></span></div><div class="mi" style="top:13.6px"><span class="l" style="left:11.5px">导出为...</span><span class="r" style="right:8.5px">Alt+Shift+Ctrl+W</span></div><div class="ms" style="left:2px;right:2px;top:27.5px"></div><div class="mi" style="top:31.5px"><span class="l" style="left:11.5px">导出首选项...</span></div><div class="ms" style="left:2px;right:2px;top:45.5px"></div><div class="mi" style="top:49.5px"><span class="l" style="left:11.5px">存储为 <i>Web</i> 所用格式<u>（</u>旧版<u>）</u>...</span><span class="r" style="right:8.5px">Alt+Shift+Ctrl+S</span></div><div class="ms" style="left:2px;right:2px;top:63.4px"></div><div class="mi dis" style="top:67.4px"><span class="l" style="left:11.5px">画板至文件...</span></div><div class="mi dis" style="top:80.0px"><span class="l" style="left:11.5px">将画板导出到 <i>PDF</i>...</span></div><div class="mi" style="top:92.6px"><span class="l" style="left:11.5px">将图层导出到文件...</span></div><div class="mi dis" style="top:105.1px"><span class="l" style="left:11.5px">将图层复合导出到 <i>PDF</i>...</span></div><div class="mi dis" style="top:117.7px"><span class="l" style="left:11.5px">图层复合导出到文件...</span></div><div class="mi" style="top:130.2px"><span class="l" style="left:11.5px">颜色查找表...</span></div><div class="ms" style="left:2px;right:2px;top:144.2px"></div><div class="mi hl" style="top:148.2px"><span class="l" style="left:11.5px">数据组作为文件(D)...</span></div><div class="mi" style="top:160.8px"><span class="l" style="left:11.5px"><i>Zoomify</i>...</span></div><div class="mi" style="top:173.3px"><span class="l" style="left:11.5px">路径到 <i>Illustrator</i>...</span></div><div class="mi" style="top:185.9px"><span class="l" style="left:11.5px">渲染视频...</span></div></div>
<svg style="left:0;top:0" width="962" height="690" viewBox="0 0 962 690">
<ellipse cx="870.7" cy="432.7" rx="87" ry="33" fill="none" stroke="#f80409" stroke-width="3.7"/>
<polygon points="12.7,86.0 27.8,22.2 31.9,26.2 27.4,9.1 16.9,23.4 22.1,21.1" fill="#a05bbd"/>
<polygon points="261.8,87.3 167.0,180.1 164.6,173.9 161.3,190.2 177.5,186.5 171.3,184.3" fill="#a05bbd"/>
<polygon points="567.2,326.3 390.1,339.2 392.7,334.3 378.4,342.8 394.0,348.7 390.6,344.3" fill="#a05bbd"/>
<polygon points="751.5,433.8 804.7,433.5 802.7,437.6 813.4,431.1 802.1,425.6 804.5,429.5" fill="#a05bbd"/>
<polygon points="753.8,478.8 809.6,451.0 809.7,455.4 815.7,445.4 804.1,444.9 807.7,447.4" fill="#a05bbd"/>
</svg>
<div class="abs" style="left:4px;top:2px;width:955px;height:0.700px;background:#3e3e3e"></div><div class="abs" style="left:4px;top:2px;width:0.700px;height:688px;background:#3e3e3e"></div>
</div></div>
</body>
</html>
